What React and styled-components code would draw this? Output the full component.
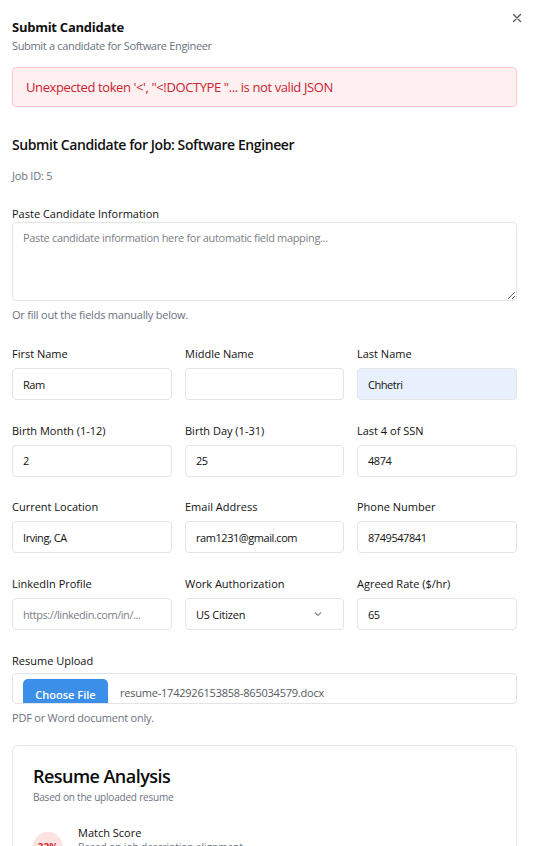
import React from "react";
import styled, { createGlobalStyle } from "styled-components";

const Global = createGlobalStyle`
  html, body { margin: 0; padding: 0; background: #fff; }
  body { font-family: "Open Sans", "Noto Sans", sans-serif; color: #111827; }
  * { box-sizing: border-box; }
`;

const Page = styled.div`
  position: relative;
  width: 537px;
  height: 846px;
  overflow: hidden;
  padding: 17px 20px 0 12px;
`;

const Close = styled.button`
  position: absolute;
  top: 12px;
  right: 14px;
  border: 0;
  background: none;
  padding: 0;
  width: 12px;
  height: 12px;
  color: #555;
  display: flex;
`;

const Header = styled.div`
  display: flex;
  flex-direction: column;
  gap: 1px;
`;

const Title = styled.h2`
  margin: 0;
  font-size: 13px;
  font-weight: 700;
  line-height: 20px;
  letter-spacing: -0.02em;
  color: #111;
`;

const Sub = styled.p`
  margin: 0;
  font-size: 11px;
  line-height: 16px;
  letter-spacing: -0.03em;
  color: #6b7280;
`;

const ErrorBox = styled.div`
  margin-top: 13px;
  height: 40px;
  border: 1px solid #fbc8cd;
  background: #fef0f1;
  border-radius: 4px;
  display: flex;
  align-items: center;
  padding: 0 13px;
  font-size: 13px;
  letter-spacing: -0.03em;
  color: #c8232f;
`;

const JobTitle = styled.h3`
  margin: 28px 0 0;
  font-size: 14px;
  font-weight: 600;
  line-height: 20px;
  letter-spacing: -0.03em;
  color: #111;
`;

const JobId = styled.p`
  margin: 13px 0 0;
  font-size: 11px;
  line-height: 16px;
  letter-spacing: -0.02em;
  color: #6b7280;
`;

const Label = styled.label`
  display: block;
  font-size: 11px;
  font-weight: 500;
  line-height: 16px;
  color: #111;
`;

const PasteBlock = styled.div`
  margin-top: 22px;
  display: flex;
  flex-direction: column;
  gap: 0;
`;

const TextArea = styled.textarea`
  width: 100%;
  height: 79px;
  border: 1px solid #e3e4e8;
  border-radius: 4px;
  padding: 7px 10px;
  font-family: inherit;
  font-size: 11px;
  letter-spacing: -0.03em;
  color: #111;
  resize: vertical;
  outline: none;
  &::placeholder { color: #7b7f87; }
`;

const Hint = styled.p`
  margin: 6px 0 0;
  font-size: 11px;
  line-height: 16px;
  letter-spacing: -0.02em;
  color: #6b7280;
`;

const Grid = styled.div`
  margin-top: 23px;
  display: grid;
  grid-template-columns: 160px 159px 160px;
  column-gap: 13px;
  row-gap: 22.7px;
  width: 505px;
`;

const Field = styled.div`
  display: flex;
  flex-direction: column;
  gap: 6px;
`;

const Input = styled.input`
  width: 100%;
  height: 32px;
  border: 1px solid #e3e4e8;
  border-radius: 4px;
  padding: 0 10px;
  font-family: inherit;
  font-size: 11px;
  letter-spacing: -0.04em;
  color: #111;
  background: ${(p) => (p.$autofill ? "#e8f0fe" : "#fff")};
  outline: none;
  &::placeholder { color: #7b7f87; }
`;

const SelectBox = styled.div`
  height: 32px;
  border: 1px solid #e3e4e8;
  border-radius: 4px;
  padding: 0 20px 0 10px;
  display: flex;
  align-items: center;
  justify-content: space-between;
  font-size: 11px;
  letter-spacing: -0.02em;
  color: #111;
`;

const UploadBlock = styled.div`
  margin-top: 23px;
  display: flex;
  flex-direction: column;
  gap: 4px;
`;

const FileBox = styled.div`
  height: 31px;
  border: 1px solid #e3e4e8;
  border-radius: 4px;
  overflow: hidden;
  display: flex;
  align-items: flex-start;
  padding: 5px 10px 0;
  gap: 12px;
`;

const ChooseBtn = styled.span`
  flex: none;
  width: 85px;
  height: 30px;
  border-radius: 5px 5px 0 0;
  background: #3b8fe8;
  color: #fff;
  font-size: 11px;
  font-weight: 600;
  display: flex;
  align-items: center;
  justify-content: center;
`;

const FileName = styled.span`
  font-size: 11px;
  letter-spacing: -0.02em;
  color: #555a62;
  line-height: 28px;
`;

const Card = styled.div`
  margin-top: 19px;
  border: 1px solid #e5e7eb;
  border-radius: 6px;
  padding: 18px 20px 0;
  height: 200px;
`;

const CardTitle = styled.h3`
  margin: 0;
  font-size: 18px;
  font-weight: 600;
  line-height: 24px;
  letter-spacing: -0.03em;
  color: #0b0b0b;
`;

const CardSub = styled.p`
  margin: 2px 0 0;
  font-size: 10px;
  line-height: 14px;
  letter-spacing: -0.02em;
  color: #6b7280;
`;

const ScoreRow = styled.div`
  margin-top: 21px;
  display: flex;
  gap: 15px;
  align-items: flex-start;
`;

const Circle = styled.div`
  flex: none;
  margin-top: 7px;
  width: 30px;
  height: 30px;
  border-radius: 50%;
  background: #fde2e4;
  color: #d22b2b;
  font-size: 10px;
  font-weight: 700;
  display: flex;
  align-items: center;
  justify-content: center;
`;

const ScoreText = styled.div`
  display: flex;
  flex-direction: column;
`;

const ScoreLabel = styled.span`
  font-size: 11px;
  font-weight: 500;
  line-height: 15px;
  color: #111;
`;

const ScoreDesc = styled.span`
  font-size: 10px;
  line-height: 14px;
  color: #6b7280;
`;

const fields = [
  { label: "First Name", value: "Ram" },
  { label: "Middle Name", value: "" },
  { label: "Last Name", value: "Chhetri", autofill: true },
  { label: "Birth Month (1-12)", value: "2" },
  { label: "Birth Day (1-31)", value: "25" },
  { label: "Last 4 of SSN", value: "4874" },
  { label: "Current Location", value: "Irving, CA" },
  { label: "Email Address", value: "ram1231@gmail.com" },
  { label: "Phone Number", value: "8749547841" },
  { label: "LinkedIn Profile", placeholder: "https://linkedin.com/in/..." },
  { label: "Work Authorization", select: "US Citizen" },
  { label: "Agreed Rate ($/hr)", value: "65" },
];

export default function App() {
  return (
    <Page>
      <Global />
      <Close aria-label="Close">
        <svg width="12" height="12" viewBox="0 0 12 12" fill="none" stroke="currentColor" strokeWidth="1.3" strokeLinecap="round">
          <path d="M2.5 2.5l7 7M9.5 2.5l-7 7" />
        </svg>
      </Close>
      <Header>
        <Title>Submit Candidate</Title>
        <Sub>Submit a candidate for Software Engineer</Sub>
      </Header>
      <ErrorBox>Unexpected token '&lt;', "&lt;!DOCTYPE "... is not valid JSON</ErrorBox>
      <JobTitle>Submit Candidate for Job: Software Engineer</JobTitle>
      <JobId>Job ID: 5</JobId>
      <PasteBlock>
        <Label>Paste Candidate Information</Label>
        <TextArea placeholder="Paste candidate information here for automatic field mapping..." />
      </PasteBlock>
      <Hint>Or fill out the fields manually below.</Hint>
      <Grid>
        {fields.map((f) => (
          <Field key={f.label}>
            <Label>{f.label}</Label>
            {f.select ? (
              <SelectBox>
                <span>{f.select}</span>
                <svg width="10" height="10" viewBox="0 0 10 10" fill="none" stroke="#888" strokeWidth="1.1">
                  <path d="M2 3.5l3 3 3-3" />
                </svg>
              </SelectBox>
            ) : (
              <Input
                defaultValue={f.value}
                placeholder={f.placeholder}
                $autofill={f.autofill}
                readOnly
              />
            )}
          </Field>
        ))}
      </Grid>
      <UploadBlock>
        <Label>Resume Upload</Label>
        <FileBox>
          <ChooseBtn>Choose File</ChooseBtn>
          <FileName>resume-1742926153858-865034579.docx</FileName>
        </FileBox>
      </UploadBlock>
      <Hint>PDF or Word document only.</Hint>
      <Card>
        <CardTitle>Resume Analysis</CardTitle>
        <CardSub>Based on the uploaded resume</CardSub>
        <ScoreRow>
          <Circle>32%</Circle>
          <ScoreText>
            <ScoreLabel>Match Score</ScoreLabel>
            <ScoreDesc>Based on job description alignment</ScoreDesc>
          </ScoreText>
        </ScoreRow>
      </Card>
    </Page>
  );
}
